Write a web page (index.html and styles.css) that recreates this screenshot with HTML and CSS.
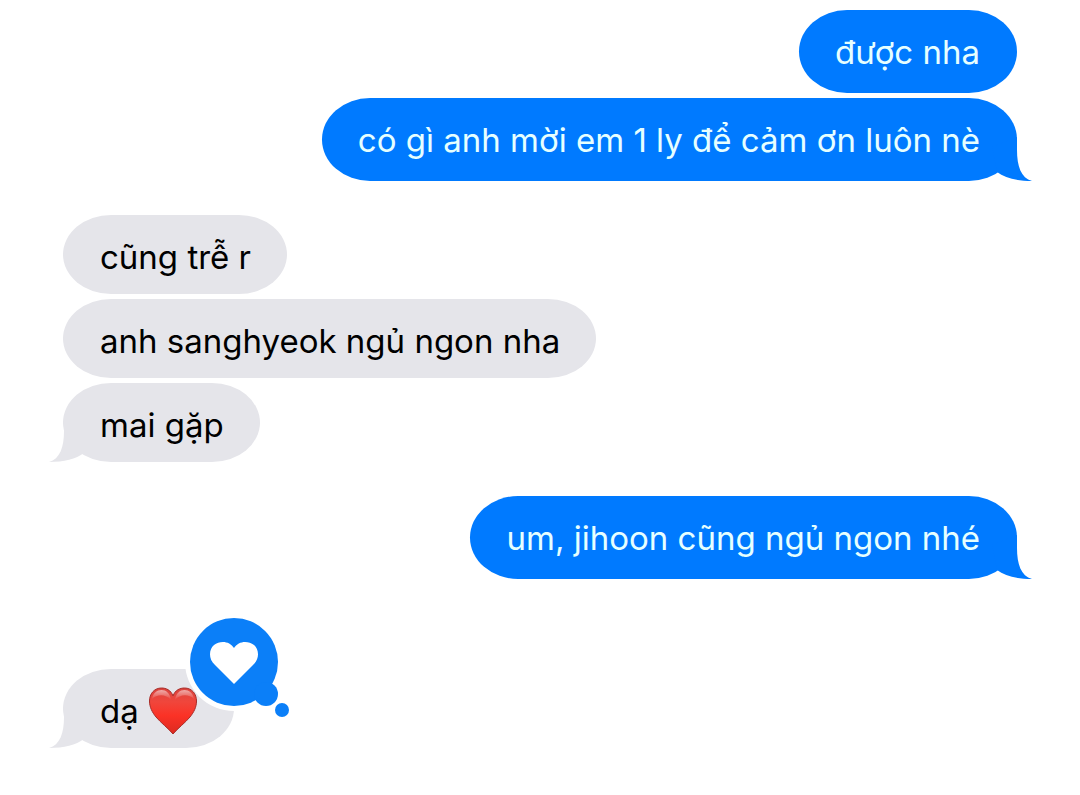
FILE: index.html
```html
<!DOCTYPE html>
<html lang="vi">
<head>
<meta charset="utf-8">
<meta name="viewport" content="width=device-width, initial-scale=1">
<title>Messages</title>
<link rel="stylesheet" href="styles.css">
</head>
<body>
<main class="chat">
  <section class="group group-sent">
    <p class="bubble">được nha</p>
    <p class="bubble">có gì anh mời em 1 ly để cảm ơn luôn nè
      <svg class="tail" viewBox="0 0 40 44" aria-hidden="true"><path d="M25 0V13C25 29 29 41 40 44C25 44 13 41 5 35L0 10Z"/></svg>
    </p>
  </section>
  <section class="group group-received">
    <p class="bubble">cũng trễ r</p>
    <p class="bubble">anh sanghyeok ngủ ngon nha</p>
    <p class="bubble">mai gặp
      <svg class="tail" viewBox="0 0 40 44" aria-hidden="true"><path d="M25 0V13C25 29 29 41 40 44C25 44 13 41 5 35L0 10Z"/></svg>
    </p>
  </section>
  <section class="group group-sent">
    <p class="bubble">um, jihoon cũng ngủ ngon nhé
      <svg class="tail" viewBox="0 0 40 44" aria-hidden="true"><path d="M25 0V13C25 29 29 41 40 44C25 44 13 41 5 35L0 10Z"/></svg>
    </p>
  </section>
  <section class="group group-received group-reacted">
    <p class="bubble">dạ
      <svg class="heart" viewBox="0 0 50 50" role="img" aria-label="❤️">
        <defs>
          <linearGradient id="heart-fill" x1="0" y1="0" x2="0" y2="1">
            <stop offset="0" stop-color="#d9443f"/>
            <stop offset="0.3" stop-color="#f0463c"/>
            <stop offset="0.6" stop-color="#fb3226"/>
            <stop offset="1" stop-color="#dc2a20"/>
          </linearGradient>
          <linearGradient id="heart-shine" x1="0" y1="0" x2="0" y2="1">
            <stop offset="0" stop-color="#fff" stop-opacity="0.55"/>
            <stop offset="1" stop-color="#fff" stop-opacity="0"/>
          </linearGradient>
        </defs>
        <path d="M25 10C23 4 18 2 13.500 2C6 2 1.500 8 1.500 15C1.500 21 4 26 8 31C13 37 20 42 25 48C30 42 37 37 42 31C46 26 48.500 21 48.500 15C48.500 8 44 2 36.500 2C32 2 27 4 25 10Z" fill="url(#heart-fill)" stroke="#a82c28" stroke-width="1"/>
        <path d="M4 13C5 7 9 4 13.500 4C18 4 22 7 23 14C18 8 9 8 4 13Z" fill="url(#heart-shine)"/>
        <path d="M27 14C28 7 32 4 36.500 4C41 4 45 7 46 13C41 8 32 8 27 14Z" fill="url(#heart-shine)"/>
      </svg>
      <svg class="tail" viewBox="0 0 40 44" aria-hidden="true"><path d="M25 0V13C25 29 29 41 40 44C25 44 13 41 5 35L0 10Z"/></svg>
      <svg class="reaction" viewBox="0 0 106 106" role="img" aria-label="Loved">
        <g class="reaction-ring"><circle cx="49" cy="49" r="49"/><circle cx="81" cy="81" r="16"/></g>
        <g class="reaction-fill"><circle cx="49" cy="49" r="44"/><circle cx="81" cy="81" r="12"/><circle cx="97" cy="97" r="7"/></g>
        <path class="reaction-heart" d="M49 71L30 52C23 46 24 36 29 32C35 27 45 28 49 35C53 28 63 27 69 32C74 36 75 46 68 52Z"/>
      </svg>
    </p>
  </section>
</main>
</body>
</html>
```
FILE: styles.css
```css
body {
  margin: 0;
  background: #fff;
  font-family: Inter, "Noto Sans", sans-serif;
  font-size: 33px;
  line-height: 43px;
}

.chat {
  display: flex;
  flex-direction: column;
  gap: 34px;
  padding: 10px 63px 46px;
}

.group {
  display: flex;
  flex-direction: column;
  gap: 5px;
}

.group-sent {
  align-items: flex-end;
  color: #e6ffff;
  --bubble: #007aff;
}

.group-received {
  align-items: flex-start;
  color: #000;
  --bubble: #e5e5ea;
}

.group-reacted {
  padding-top: 56px;
}

.bubble {
  position: relative;
  margin: 0;
  border-radius: 48px / 50%;
  background: var(--bubble);
}

.group-sent .bubble {
  padding: 21px 37px 19px 36px;
}

.group-received .bubble {
  padding: 21px 36px 15px 37px;
}

.tail {
  position: absolute;
  bottom: 0;
  width: 40px;
  height: 44px;
  fill: var(--bubble);
}

.group-sent .tail {
  right: -15px;
}

.group-received .tail {
  left: -14px;
  transform: scaleX(-1);
}

.heart {
  width: 50px;
  height: 50px;
  margin: -11px 0 -5px;
  vertical-align: middle;
}

.reaction {
  position: absolute;
  top: -56px;
  right: -57px;
  width: 106px;
  height: 106px;
}

.reaction-ring,
.reaction-heart {
  fill: #fff;
}

.reaction-fill {
  fill: #0b7ff8;
}
```
